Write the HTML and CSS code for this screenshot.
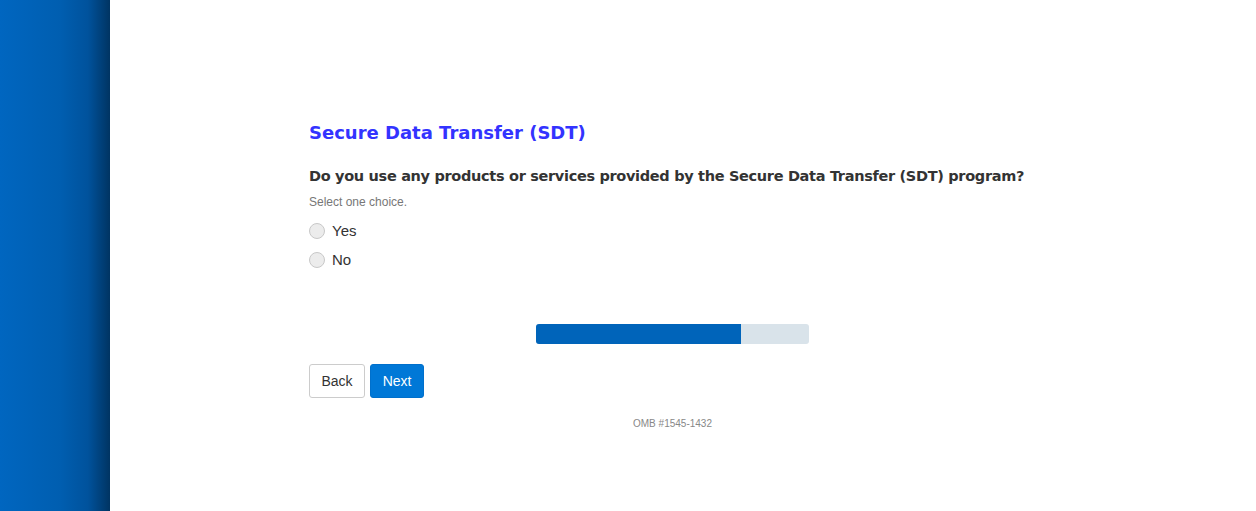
FILE: index.html
```html
<!DOCTYPE html>
<html lang="en">
<head>
    <meta charset="UTF-8">
    <meta name="viewport" content="width=device-width, initial-scale=1.0">
    <title>Secure Data Transfer (SDT)</title>
    <link rel="stylesheet" href="styles.css">
</head>
<body>
    <div class="page">
        <div class="sidebar"></div>
        <main class="main">
            <div class="survey">
                <h1>Secure Data Transfer (SDT)</h1>
                <h2>Do you use any products or services provided by the Secure Data Transfer (SDT) program?</h2>
                <p class="hint">Select one choice.</p>
                <label class="choice"><input type="radio" name="sdt" value="yes"><span>Yes</span></label>
                <label class="choice"><input type="radio" name="sdt" value="no"><span>No</span></label>

                <div class="progress">
                    <div class="progress-bar" style="width: 75%"></div>
                </div>

                <div class="buttons">
                    <button class="btn btn-back">Back</button>
                    <button class="btn btn-next">Next</button>
                </div>

                <p class="omb">OMB #1545-1432</p>
            </div>
        </main>
    </div>
</body>
</html>
```

FILE: styles.css
```css
html, body {
    margin: 0;
    padding: 0;
    height: 100%;
    background-color: #fff;
    font-family: "Liberation Sans", Arial, sans-serif;
    color: #333;
}

.page {
    display: flex;
    min-height: 100%;
}

.sidebar {
    width: 110px;
    flex-shrink: 0;
    background: linear-gradient(to right, #0066c0 0%, #005eb0 55%, #00529c 80%, #003462 100%);
}

.main {
    flex: 1;
    padding: 119px 0 0 199px;
}

.survey {
    width: 727px;
}

h1 {
    margin: 0 0 18px;
    font-family: "DejaVu Sans", Verdana, sans-serif;
    font-size: 18px;
    font-weight: bold;
    color: #3333ff;
    line-height: 28px;
}

h2 {
    margin: 0 0 7px;
    font-family: "DejaVu Sans", Verdana, sans-serif;
    font-size: 14.5px;
    font-weight: bold;
    letter-spacing: -0.32px;
    white-space: nowrap;
    color: #333;
    line-height: 22px;
}

.hint {
    margin: 0 0 6px;
    font-size: 12px;
    color: #777;
    line-height: 16px;
}

.choice {
    display: flex;
    align-items: center;
    height: 29px;
    font-size: 15px;
    cursor: pointer;
}

.choice input {
    appearance: none;
    width: 16px;
    height: 16px;
    margin: 0 7px 0 0;
    border: 1px solid #c8c8c8;
    border-radius: 50%;
    background-color: #ececec;
}

.progress {
    width: 273px;
    height: 20px;
    margin: 50px auto 20px;
    background-color: #d9e3ea;
    border-radius: 3px;
    overflow: hidden;
}

.progress-bar {
    height: 100%;
    background-color: #0064ba;
}

.buttons {
    display: flex;
    gap: 5px;
}

.btn {
    height: 34px;
    padding: 0 11.5px;
    font-family: "Liberation Sans", Arial, sans-serif;
    font-size: 14px;
    border-radius: 3px;
    cursor: pointer;
}

.btn-back {
    background-color: #fff;
    border: 1px solid #ccc;
    color: #333;
}

.btn-next {
    background-color: #0078d7;
    border: 1px solid #0070cc;
    color: #fff;
}

.omb {
    margin: 20px 0 0;
    text-align: center;
    font-size: 10px;
    color: #888;
}
```
